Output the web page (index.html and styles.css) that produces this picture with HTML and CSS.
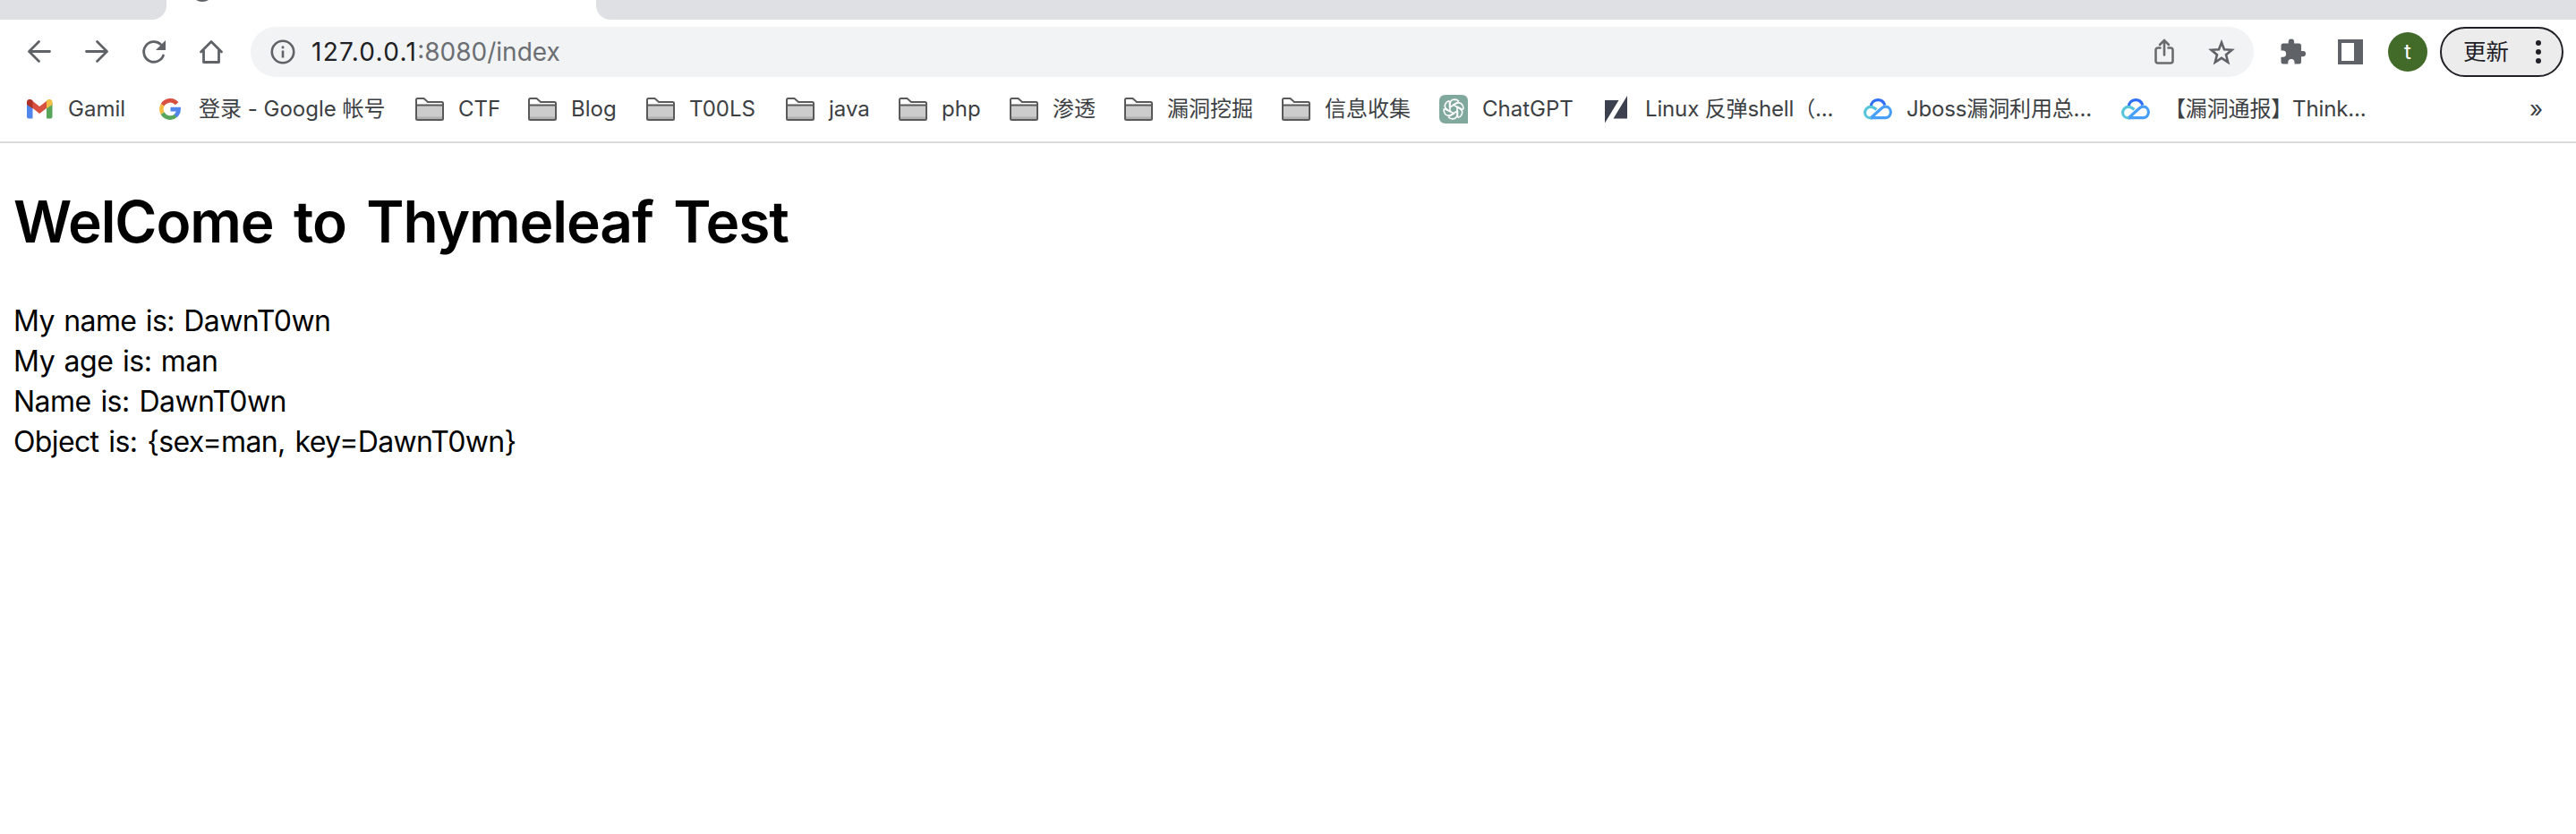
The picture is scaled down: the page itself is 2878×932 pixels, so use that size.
FILE: index.html
```html
<!DOCTYPE html>
<html lang="zh-CN">
<head>
<meta charset="utf-8">
<title>Thymeleaf Test</title>
<link rel="stylesheet" href="styles.css">
</head>
<body>
<svg class="defs" aria-hidden="true">
  <symbol id="folder" viewBox="0 0 32 26">
    <path d="M1 8V2.500Q1 1 2.500 1H9.500L14 5H29.500Q31 5 31 6.500V9" fill="#fff" stroke="#5a5a5a" stroke-width="2"/>
    <rect x="1" y="9" width="30" height="16" rx="1" fill="#ccc"/>
    <path d="M2 21.500H30V24H2Z" fill="#b0b0b0"/>
    <path d="M1 8.500H31V23.500Q31 25 29.500 25H2.500Q1 25 1 23.500Z" fill="none" stroke="#5a5a5a" stroke-width="2"/>
  </symbol>
  <symbol id="cloud" viewBox="0 0 32 24">
    <path d="M8.200 9.500C8.500 5 11.500 1.700 16 1.700C19.800 1.700 22.700 4 23.700 7.500" fill="none" stroke="#2f6df6" stroke-width="3.200"/>
    <path d="M14.500 12.500C12.500 10.500 10.500 9.400 8.200 9.400C4.300 9.400 1.600 12.300 1.600 15.700C1.600 19.300 4.500 21.800 8 21.800H10" fill="none" stroke="#57c5d8" stroke-width="3.200"/>
    <path d="M8.500 21.500L19 12Q22 9.200 24.500 9.200C28 9.200 30.400 12 30.400 15.300C30.400 19 27.700 21.600 24.200 21.600H8.500" fill="none" stroke="#479ffb" stroke-width="3.200"/>
  </symbol>
</svg>

<div class="tabs">
  <div class="tab-left"></div>
  <div class="tab-active"><svg class="fav" viewBox="0 0 14 2"><path d="M0 0H14Q11 2 7 2Q3 2 0 0Z" fill="#5f6368"/></svg></div>
  <div class="tab-right"></div>
</div>

<div class="toolbar">
  <div class="nav">
    <svg viewBox="0 0 32 32"><path d="M27.500 15.500H5M15.500 4.500L4.500 15.500L15.500 26.500" class="line"/></svg>
    <svg viewBox="0 0 32 32"><path d="M4.500 15.500H27M16.500 4.500L27.500 15.500L16.500 26.500" class="line"/></svg>
    <svg viewBox="0 0 32 32"><path d="M26.500 20A11.300 11.300 0 1 1 23.500 7.500" class="line"/><path d="M29 3V14H18Z" fill="#5f6368"/></svg>
    <svg viewBox="0 0 32 32"><path d="M4.500 16L16 4.500L27.500 16M7.500 14V27.500H24.500V14" class="line"/></svg>
  </div>
  <div class="omnibox">
    <svg class="info" viewBox="0 0 28 28"><circle cx="14" cy="14" r="12.200" fill="none" stroke="#5f6368" stroke-width="2.600"/><path d="M12.700 12.500H15.300V20.500H12.700ZM12.700 7.500H15.300V10.200H12.700Z" fill="#5f6368"/></svg>
    <div class="url"><span class="host">127.0.0.1</span><span class="path">:8080/index</span></div>
    <svg class="share" viewBox="0 0 22 30"><path d="M6.500 10.500H4Q1.500 10.500 1.500 13V25Q1.500 27.500 4 27.500H18Q20.500 27.500 20.500 25V13Q20.500 10.500 18 10.500H15.500" class="thin"/><path d="M11 18.500V2.500M6 7L11 2L16 7" class="thin"/></svg>
    <svg class="star" viewBox="0 0 30 29"><path d="M15 3.500L18 11.300L26.500 11.800L20 17.200L22.200 25.500L15 20.900L7.800 25.500L10 17.200L3.500 11.800L12 11.300Z" fill="none" stroke="#5f6368" stroke-width="2.600"/></svg>
  </div>
  <svg class="puzzle" viewBox="0 0 29 29"><path d="M3 5.500H8.700V3.800A3.200 3.200 0 0 1 15.100 3.800V5.500H20.500Q23 5.500 23 8V14H25A3.100 3.100 0 0 1 25 20.200H23V26Q23 28.500 20.500 28.500H15.500V26.500A3.600 3.600 0 0 0 8.300 26.500V28.500H3Q.5 28.500 .5 26V20.800H2.500A3.600 3.600 0 0 0 2.500 13.600H.5V8Q.5 5.500 3 5.500Z" fill="#5f6368"/></svg>
  <div class="panel"></div>
  <div class="avatar">t</div>
  <div class="update"><span>更新</span><svg class="dots" viewBox="0 0 6 26"><circle cx="3" cy="3" r="3"/><circle cx="3" cy="13" r="3"/><circle cx="3" cy="23" r="3"/></svg></div>
</div>

<div class="bookmarks">
  <div class="bm w146"><svg viewBox="0 0 32 24"><path d="M2 5H8.500V22.500H4Q2 22.500 2 20.500Z" fill="#5186ec"/><path d="M24 5H30.500V20.500Q30.500 22.500 28.500 22.500H24Z" fill="#58a55c"/><path d="M8 2.500L16.200 9L24.500 2.500V10.500L16.200 17L8 10.500Z" fill="#d85140"/><path d="M2 7V4C2 1 5.500 0 8.500 2.500V11.200Z" fill="#b03226"/><path d="M30.500 7V4C30.500 1 27 0 24 2.500V11.200Z" fill="#f1bd42"/></svg><span>Gamil</span></div>
  <div class="bm w290"><svg viewBox="0 0 32 24"><g fill="none" stroke-width="4.600"><path d="M23.600 5.800A9.700 9.700 0 0 0 7.600 7.400" stroke="#d85140"/><path d="M7.600 7.400A9.700 9.700 0 0 0 7.600 16.600" stroke="#f1bd42"/><path d="M7.600 16.600A9.700 9.700 0 0 0 22.600 19.100" stroke="#58a55c"/><path d="M22.200 19.400A9.500 9.500 0 0 0 25.600 12.100H16.500" stroke="#5186ec"/></g></svg><span>登录 - Google 帐号</span></div>
  <div class="bm w126"><svg class="fold"><use href="#folder"/></svg><span>CTF</span></div>
  <div class="bm w132"><svg class="fold"><use href="#folder"/></svg><span>Blog</span></div>
  <div class="bm w156"><svg class="fold"><use href="#folder"/></svg><span>T00LS</span></div>
  <div class="bm w126"><svg class="fold"><use href="#folder"/></svg><span>java</span></div>
  <div class="bm w124"><svg class="fold"><use href="#folder"/></svg><span>php</span></div>
  <div class="bm w128"><svg class="fold"><use href="#folder"/></svg><span>渗透</span></div>
  <div class="bm w176"><svg class="fold"><use href="#folder"/></svg><span>漏洞挖掘</span></div>
  <div class="bm w176"><svg class="fold"><use href="#folder"/></svg><span>信息收集</span></div>
  <div class="bm w182"><svg class="gpt" viewBox="0 0 32 32"><path d="M7 0H25Q32 0 32 7V32H7Q0 32 0 25V7Q0 0 7 0Z" fill="#80a89c"/><g fill="none" stroke="#fff" stroke-width="1.600" transform="translate(16 16)"><path id="petal" d="M-4 2.300V-5.500Q-4 -10.700 1 -10.900Q4 -10.900 6 -8.800M-1 -4.600L5.500 -8.400"/><use href="#petal" transform="rotate(60)"/><use href="#petal" transform="rotate(120)"/><use href="#petal" transform="rotate(180)"/><use href="#petal" transform="rotate(240)"/><use href="#petal" transform="rotate(300)"/></g></svg><span>ChatGPT</span></div>
  <div class="bm w292 tight"><svg class="gpt" viewBox="0 0 32 32"><path d="M3 6H18.500L3 31.500ZM28 1V26.500H12.500Z" fill="#3d414f"/></svg><span>Linux 反弹shell（...</span></div>
  <div class="bm w288 tight"><svg><use href="#cloud"/></svg><span>Jboss漏洞利用总...</span></div>
  <div class="bm last tight"><svg><use href="#cloud"/></svg><span>【漏洞通报】Think...</span></div>
  <div class="more">»</div>
</div>

<main class="page">
  <h1>WelCome to Thymeleaf Test</h1>
  <div class="l1">My name is: DawnT0wn</div>
  <div class="l2">My age is: man</div>
  <div class="l3">Name is: DawnT0wn</div>
  <div class="l4">Object is: {sex=man, key=DawnT0wn}</div>
</main>
</body>
</html>
```

FILE: styles.css
```css
* { box-sizing: border-box; }
body { margin: 0; background: #fff; font-family: Inter, "Noto Sans CJK SC", sans-serif; white-space: nowrap; overflow: hidden; }
svg { display: block; flex: none; }
.defs { display: none; }

.tabs { display: flex; height: 22px; }
.tab-left { width: 186px; background: #dee0e4; border-bottom-right-radius: 16px; }
.tab-active { width: 480px; padding-left: 33px; }
.fav { width: 14px; height: 2px; }
.tab-right { flex: 1; background: #dee0e4; border-bottom-left-radius: 16px; }

.toolbar { display: flex; align-items: center; height: 72px; padding: 0 14px 0 28px; }
.nav { display: flex; gap: 32px; width: 252px; }
.nav svg { width: 32px; height: 32px; }
.line { fill: none; stroke: #5f6368; stroke-width: 2.8; stroke-linecap: round; stroke-linejoin: round; }
.thin { fill: none; stroke: #6b6c6e; stroke-width: 2.6; stroke-linecap: round; }
.omnibox { display: flex; align-items: center; width: 2238px; height: 56px; border-radius: 28px; background: #f1f3f4; padding: 0 21px 0 22px; }
.info { width: 28px; height: 28px; }
.url { flex: 1; margin-left: 18px; font-size: 28px; line-height: 40px; font-family: Inter, sans-serif; }
.host { color: #202124; letter-spacing: 1.3px; }
.path { color: #6b6e72; letter-spacing: 0; }
.share { width: 22px; height: 30px; margin-right: 38px; }
.star { width: 30px; height: 29px; }
.puzzle { width: 29px; height: 29px; margin: 0 35px 2px 30px; }
.panel { width: 28px; height: 28px; border: 4px solid #5f6368; border-right-width: 10px; margin-right: 28px; }
.avatar { width: 44px; height: 44px; border-radius: 50%; background: #426a29; color: #fff; font-size: 24px; line-height: 43px; text-align: center; margin-right: 14px; }
.update { display: flex; align-items: center; width: 138px; height: 56px; border: 2px solid #202026; border-radius: 28px; background: #ececec; color: #202026; padding-left: 24px; font-size: 25.5px; line-height: 40px; }
.dots { width: 6px; height: 26px; margin-left: 30px; fill: #202026; }

.bookmarks { display: flex; align-items: center; height: 66px; padding: 0 0 8px 28px; border-bottom: 2px solid #dadada; color: #3c4043; font-size: 24px; line-height: 34px; }
.bm { display: flex; align-items: center; gap: 16px; flex: none; height: 34px; }
.bm svg { width: 32px; height: 24px; }
.bm .fold { height: 26px; }
.bm .gpt { height: 32px; }
.tight { letter-spacing: -0.15px; }
.w146 { width: 146px; }
.w290 { width: 290px; }
.w126 { width: 126px; }
.w132 { width: 132px; }
.w156 { width: 156px; }
.w124 { width: 124px; }
.w128 { width: 128px; }
.w176 { width: 176px; }
.w182 { width: 182px; }
.w292 { width: 292px; }
.w288 { width: 288px; }
.last { width: 456px; }
.more { font-size: 26px; }

.page { padding: 43px 15px; color: #000; font-size: 32px; line-height: 45px; }
h1 { margin: 0 0 43px; font-size: 64px; line-height: 90px; font-weight: 600; letter-spacing: -1.1px; word-spacing: 7.5px; }
.l1 { letter-spacing: -0.6px; word-spacing: 2px; }
.l2 { letter-spacing: -0.4px; word-spacing: 1.7px; }
.l3 { letter-spacing: -0.55px; word-spacing: 2.4px; }
.l4 { letter-spacing: -0.63px; word-spacing: 2.5px; }
```
